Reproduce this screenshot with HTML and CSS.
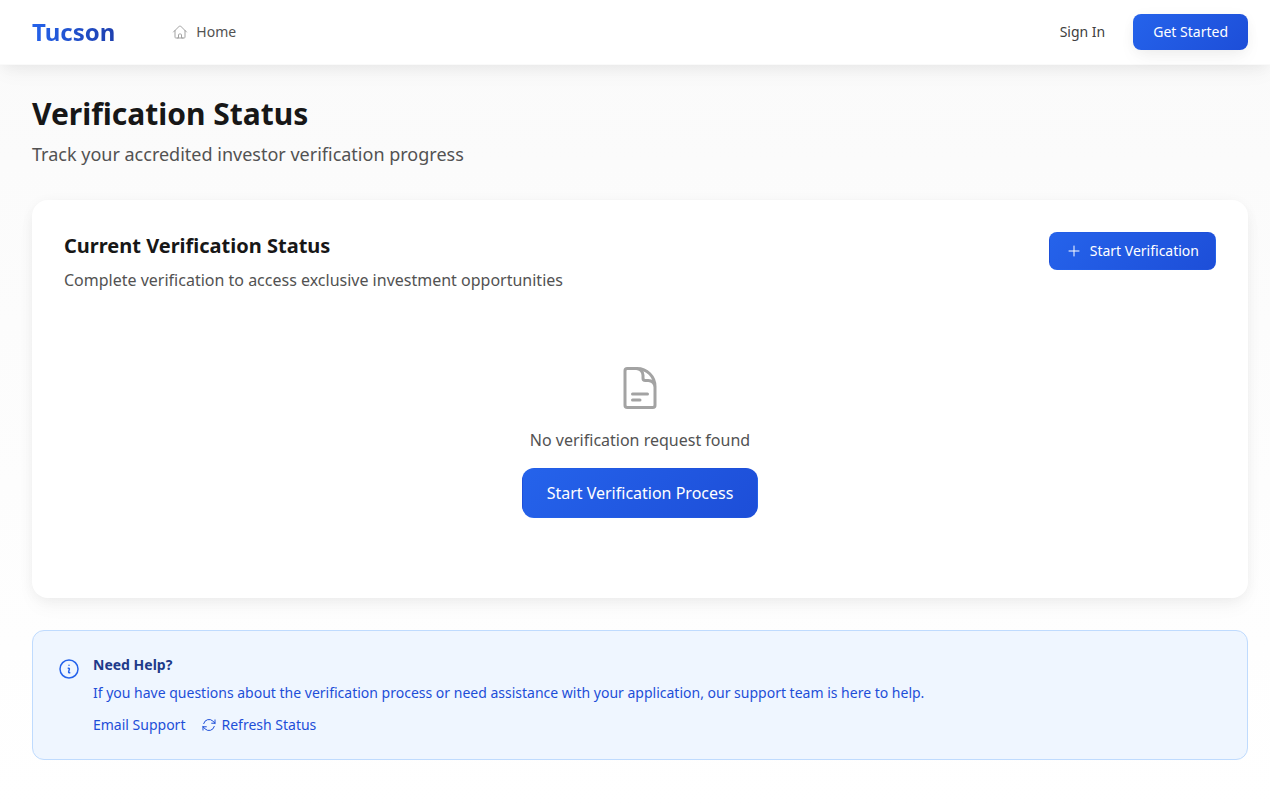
FILE: index.html
```html
<!DOCTYPE html>
<html lang="en">
<head>
<meta charset="utf-8">
<meta name="viewport" content="width=device-width, initial-scale=1">
<title>Verification Status - Tucson</title>
<link rel="stylesheet" href="styles.css">
</head>
<body>
<header class="topbar">
  <a class="brand" href="#">Tucson</a>
  <nav class="nav">
    <a class="nav-link" href="#">
      <svg class="icon icon-muted" viewBox="0 0 24 24" aria-hidden="true"><path d="m2.25 12 8.954-8.955c.44-.439 1.152-.439 1.591 0L21.75 12M4.5 9.75v10.125c0 .621.504 1.125 1.125 1.125H9.75v-4.875c0-.621.504-1.125 1.125-1.125h2.25c.621 0 1.125.504 1.125 1.125V21h4.125c.621 0 1.125-.504 1.125-1.125V9.75M8.25 21h8.25"/></svg>
      Home
    </a>
  </nav>
  <div class="account">
    <a class="sign-in" href="#">Sign In</a>
    <a class="button button-small button-raised" href="#">Get Started</a>
  </div>
</header>
<main class="page">
  <div class="page-heading">
    <h1 class="page-title">Verification Status</h1>
    <p class="page-subtitle">Track your accredited investor verification progress</p>
  </div>
  <section class="card">
    <div class="card-header">
      <div>
        <h2 class="card-title">Current Verification Status</h2>
        <p class="card-text">Complete verification to access exclusive investment opportunities</p>
      </div>
      <button class="button button-medium" type="button">
        <svg class="icon" viewBox="0 0 24 24" aria-hidden="true"><path d="M12 4.5v15m7.5-7.5h-15"/></svg>
        Start Verification
      </button>
    </div>
    <div class="empty">
      <svg class="icon icon-large" viewBox="0 0 24 24" aria-hidden="true"><path d="M19.5 14.25v-2.625a3.375 3.375 0 0 0-3.375-3.375h-1.5A1.125 1.125 0 0 1 13.5 7.125v-1.5a3.375 3.375 0 0 0-3.375-3.375H8.25m0 12.75h7.5m-7.5 3H12M10.5 2.25H5.625c-.621 0-1.125.504-1.125 1.125v17.25c0 .621.504 1.125 1.125 1.125h12.75c.621 0 1.125-.504 1.125-1.125V11.25a9 9 0 0 0-9-9Z"/></svg>
      <p class="empty-text">No verification request found</p>
      <button class="button button-large" type="button">Start Verification Process</button>
    </div>
  </section>
  <section class="help">
    <svg class="icon icon-info" viewBox="0 0 24 24" aria-hidden="true"><path d="m11.25 11.25.041-.02a.75.75 0 0 1 1.063.852l-.708 2.836a.75.75 0 0 0 1.063.853l.041-.021M21 12a9 9 0 1 1-18 0 9 9 0 0 1 18 0Zm-9-3.75h.008v.008H12V8.25Z"/></svg>
    <div>
      <h3 class="help-title">Need Help?</h3>
      <p class="help-text">If you have questions about the verification process or need assistance with your application, our support team is here to help.</p>
      <div class="help-actions">
        <a class="help-link" href="#">Email Support</a>
        <button class="help-link" type="button">
          <svg class="icon" viewBox="0 0 24 24" aria-hidden="true"><path d="M16.023 9.348h4.992v-.001M2.985 19.644v-4.992m0 0h4.992m-4.993 0 3.181 3.183a8.25 8.25 0 0 0 13.803-3.7M4.031 9.865a8.25 8.25 0 0 1 13.803-3.7l3.181 3.182m0-4.991v4.99"/></svg>
          Refresh Status
        </button>
      </div>
    </div>
  </section>
</main>
</body>
</html>
```
FILE: styles.css
```css
*, *::before, *::after { box-sizing: border-box; }

:root {
  --shadow-soft: 0 2px 15px -3px rgba(0, 0, 0, 0.07), 0 10px 20px -2px rgba(0, 0, 0, 0.04);
}

body {
  margin: 0;
  min-height: 100vh;
  background: linear-gradient(180deg, #fafafa 0%, #ffffff 100%);
  color: #171717;
  font-family: "Noto Sans", sans-serif;
  font-size: 16px;
  line-height: 24px;
}

h1, h2, h3, p { margin: 0; }
a { color: inherit; text-decoration: none; }
button { font: inherit; cursor: pointer; }

.icon {
  flex: none;
  width: 16px;
  height: 16px;
  fill: none;
  stroke: currentColor;
  stroke-width: 1.5;
  stroke-linecap: round;
  stroke-linejoin: round;
}
.icon-muted { color: #a3a3a3; }
.icon-large { width: 48px; height: 48px; color: #a3a3a3; }
.icon-info { width: 24px; height: 24px; margin-top: 2px; color: #2563eb; }

.topbar {
  display: flex;
  align-items: center;
  padding: 14px 22px 14px 32px;
  border-bottom: 1px solid #fafafa;
  background: #ffffff;
  box-shadow: var(--shadow-soft);
}
.brand {
  background: linear-gradient(90deg, #2563eb, #1e40af);
  background-clip: text;
  -webkit-background-clip: text;
  color: transparent;
  font-size: 24px;
  font-weight: 700;
  line-height: 32px;
}
.nav { margin-left: 57px; }
.nav-link {
  display: flex;
  align-items: center;
  gap: 8px;
  color: #525252;
  font-size: 14px;
  line-height: 20px;
}
.account {
  display: flex;
  align-items: center;
  gap: 28px;
  margin-left: auto;
}
.sign-in { color: #404040; font-size: 14px; line-height: 20px; }

.button {
  display: inline-flex;
  align-items: center;
  justify-content: center;
  gap: 8px;
  border: 0;
  border-radius: 8px;
  background: linear-gradient(135deg, #2563eb, #1d4ed8);
  color: #ffffff;
  font-size: 14px;
  line-height: 20px;
  white-space: nowrap;
}
.button-small { padding: 8px 20px; }
.button-medium { padding: 8px 16px; border: 1px solid transparent; }
.button-large {
  padding: 12px 24px;
  border: 1px solid transparent;
  border-radius: 12px;
  font-size: 16px;
  line-height: 24px;
}
.button-raised { box-shadow: var(--shadow-soft); }

.page { padding: 31px 22px 48px 32px; }
.page-heading { margin-bottom: 32px; }
.page-title { font-size: 30px; font-weight: 700; line-height: 36px; }
.page-subtitle {
  margin-top: 8px;
  color: #525252;
  font-size: 18px;
  line-height: 28px;
}

.card {
  padding: 32px;
  border-radius: 16px;
  background: #ffffff;
  box-shadow: var(--shadow-soft);
}
.card-header {
  display: flex;
  align-items: flex-start;
  justify-content: space-between;
  gap: 24px;
}
.card-title { font-size: 20px; font-weight: 700; line-height: 28px; }
.card-text { margin-top: 8px; color: #525252; }

.empty {
  display: flex;
  flex-direction: column;
  align-items: center;
  padding: 72px 0 48px;
}
.empty-text { margin: 16px 0; color: #525252; }

.help {
  display: flex;
  align-items: flex-start;
  gap: 12px;
  margin-top: 32px;
  padding: 24px;
  border: 1px solid #bfdbfe;
  border-radius: 12px;
  background: #eff6ff;
}
.help-title {
  color: #1e3a8a;
  font-size: 14px;
  font-weight: 700;
  line-height: 20px;
}
.help-text {
  margin-top: 8px;
  color: #1d4ed8;
  font-size: 14px;
  line-height: 20px;
}
.help-actions { display: flex; gap: 16px; margin-top: 12px; }
.help-link {
  display: inline-flex;
  align-items: center;
  gap: 4px;
  padding: 0;
  border: 0;
  background: none;
  color: #1d4ed8;
  font-size: 14px;
  line-height: 20px;
}
```
